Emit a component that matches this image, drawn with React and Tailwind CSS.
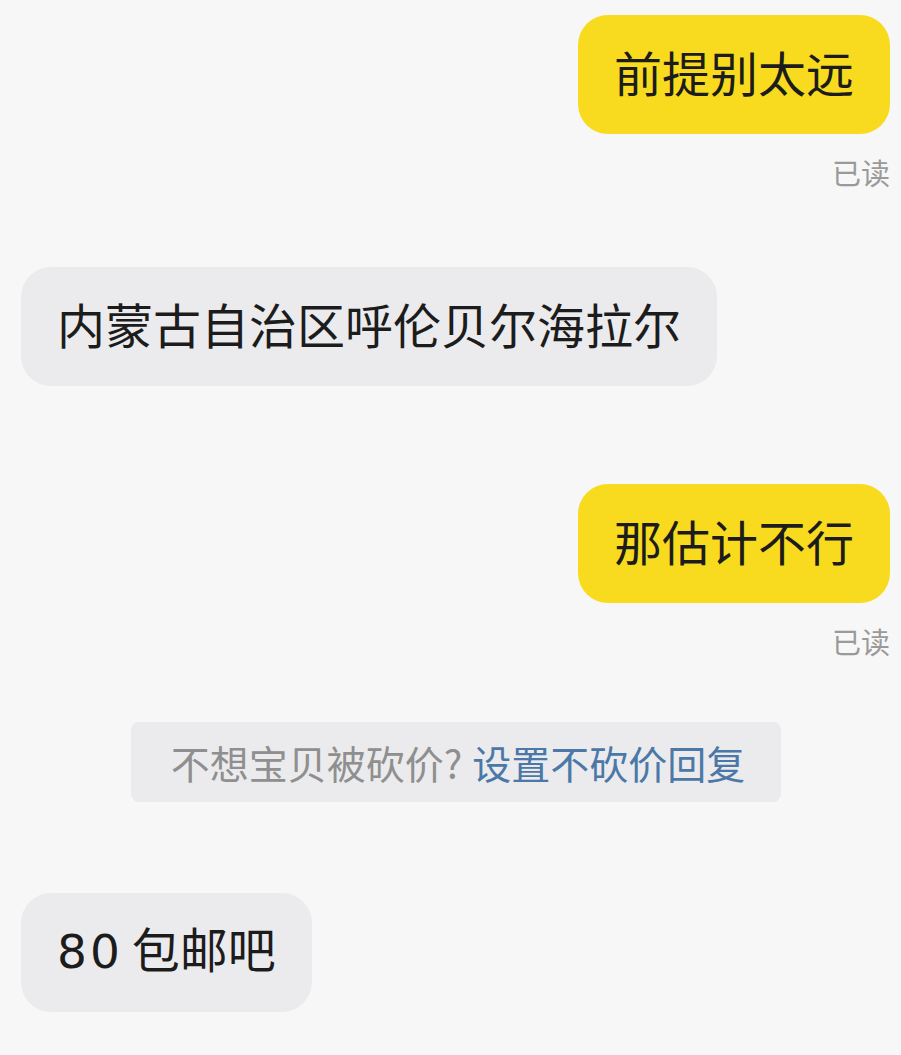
const font = { fontFamily: '"Noto Sans CJK SC", "Noto Sans", sans-serif' };

function Mine({ text }) {
  return (
    <div className="flex justify-end pr-[11px]">
      <div className="h-[119px] flex items-center px-9 pb-2 rounded-[30px] bg-[#f8db1f] text-[48px] text-[#1c1c1c] leading-none">
        {text}
      </div>
    </div>
  );
}

function Read() {
  return (
    <div className="flex justify-end pr-[11px] text-[29px] leading-[34px] text-[#9a9a9a]">
      已读
    </div>
  );
}

function Theirs({ children }) {
  return (
    <div className="flex justify-start pl-[21px]">
      <div className="h-[119px] flex items-center px-9 pb-2 rounded-[30px] bg-[#ebebed] text-[48px] text-[#1c1c1c] leading-none">
        {children}
      </div>
    </div>
  );
}

export default function App() {
  return (
    <div style={font} className="w-[901px] h-[1055px] overflow-hidden bg-[#f7f7f7] flex flex-col pt-[15px]">
      <Mine text="前提别太远" />
      <div className="mt-[21px]">
        <Read />
      </div>
      <div className="mt-[78px]">
        <Theirs>内蒙古自治区呼伦贝尔海拉尔</Theirs>
      </div>
      <div className="mt-[98px]">
        <Mine text="那估计不行" />
      </div>
      <div className="mt-[21px]">
        <Read />
      </div>
      <div className="mt-[64px] pl-[131px]">
        <div className="w-[650px] h-[80px] flex items-center justify-center pl-1 rounded-[8px] bg-[#ebebed] text-[39px] leading-none">
          <span className="text-[#8f8f8f]">不想宝贝被砍价?</span>
          <span className="ml-[10px] text-[#4c78a8]">设置不砍价回复</span>
        </div>
      </div>
      <div className="mt-[91px]">
        <Theirs>
          <span>
            <span className="font-['DejaVu_Sans',sans-serif] text-[47px] tracking-[3px] mr-[9px]">80</span>
            包邮吧
          </span>
        </Theirs>
      </div>
    </div>
  );
}
